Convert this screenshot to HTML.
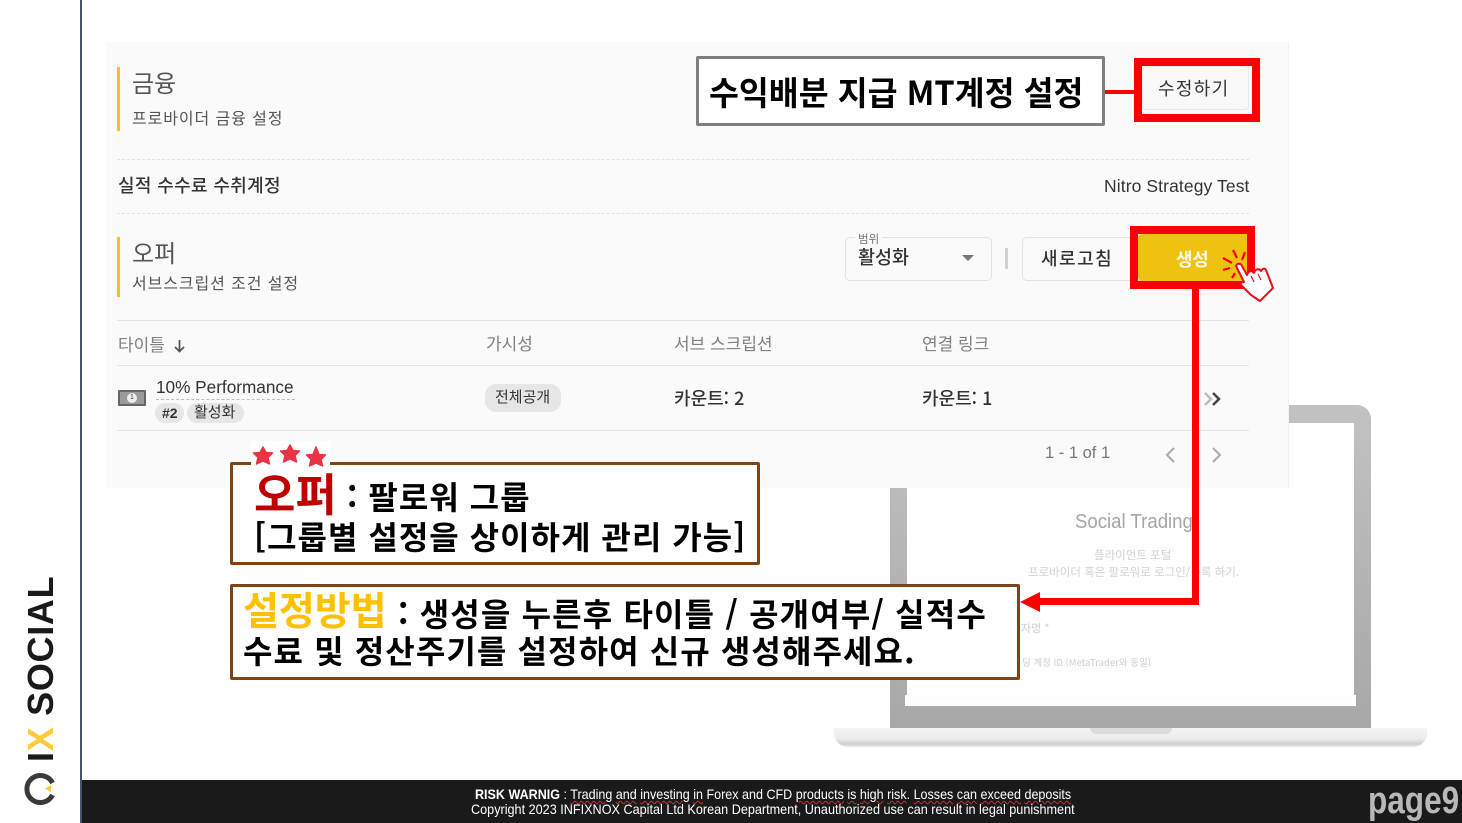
<!DOCTYPE html>
<html lang="ko"><head><meta charset="utf-8"><title>page9</title>
<style>
html,body{margin:0;padding:0;background:#fff}
body{width:1462px;height:823px;position:relative;overflow:hidden;font-family:"Liberation Sans","Noto Sans CJK KR",sans-serif;color:#333}
.a{position:absolute}
.t{position:absolute;white-space:nowrap;line-height:1}
.k{font-family:"Noto Sans CJK KR",sans-serif}
.b{font-weight:700;color:#000}
.h{height:1px;background:#e4e4e4;position:absolute;left:117px;width:1132px}
.d{height:0;border-top:1px dashed #e2e2e2;position:absolute;left:117px;width:1132px}
.w{text-decoration:underline wavy #c33 1px;text-underline-offset:1px}
</style></head><body>

<!-- laptop -->
<div class="a" style="left:890px;top:405px;width:481px;height:323px;background:linear-gradient(#c2c2c2,#b4b4b4 50%,#a8a8a8);border-radius:14px 14px 0 0"></div>
<div class="a" style="left:907px;top:423px;width:447px;height:283px;background:#fefefe"></div>
<div class="a" style="left:905px;top:695px;width:451px;height:11px;background:#fdfdfd"></div>
<div class="a" style="left:834px;top:728px;width:593px;height:19px;background:linear-gradient(#f4f4f4,#ececec 55%,#cfcfcf 85%,#eee);border-radius:0 0 14px 14px"></div>
<div class="a" style="left:1090px;top:728px;width:82px;height:6px;background:#dcdcdc;border-radius:0 0 6px 6px"></div>
<div class="t" style="left:1075px;top:512px;font-size:20px;color:#a6a6a6;transform-origin:0 0;transform:scaleX(.93)">Social Trading</div>
<div class="t k" style="left:1094px;top:550px;font-size:11.500px;color:#d2d2d2">플라이언트 포털</div>
<div class="t k" style="left:1028px;top:567px;font-size:11.500px;color:#d2d2d2">프로바이더 혹은 팔로워로 로그인/등록 하기.</div>
<div class="t k" style="left:1021px;top:623px;font-size:11px;color:#cfcfcf">자명 *</div>
<div class="t k" style="left:1022px;top:658px;font-size:9.500px;color:#cfcfcf">딩 계정 ID (MetaTrader와 동일)</div>

<!-- panel -->
<div class="a" style="left:106px;top:42px;width:1183px;height:446px;background:#fafafa;border-right:1px solid #f0f0f0;box-sizing:border-box"></div>

<div class="a" style="left:117px;top:67px;width:3px;height:64px;background:#eec51f"></div>
<div class="t k" style="left:132px;top:70px;font-size:24px;color:#555">금융</div>
<div class="t k" style="left:132px;top:109px;font-size:16px;letter-spacing:.9px;color:#555">프로바이더 금융 설정</div>
<div class="d" style="top:159px"></div>
<div class="t k" style="left:118px;top:176px;font-size:18px;letter-spacing:.35px;color:#333;font-weight:500">실적 수수료 수취계정</div>
<div class="t" style="left:1104px;top:178px;font-size:17.500px;letter-spacing:.1px;color:#333">Nitro Strategy Test</div>
<div class="d" style="top:213px"></div>

<div class="a" style="left:117px;top:237px;width:3px;height:60px;background:#eec51f"></div>
<div class="t k" style="left:132px;top:240px;font-size:24px;color:#555">오퍼</div>
<div class="t k" style="left:132px;top:274px;font-size:16px;letter-spacing:.9px;color:#555">서브스크립션 조건 설정</div>

<div class="a" style="left:845px;top:237px;width:147px;height:44px;border:1px solid #e2e2e2;border-radius:5px;box-sizing:border-box;background:#fafafa"></div>
<div class="a k" style="left:855px;top:233px;padding:0 3px;background:#fafafa;font-size:11.500px;line-height:12px;color:#777">범위</div>
<div class="t k" style="left:858px;top:248px;font-size:18.500px;color:#333;font-weight:500">활성화</div>
<div class="a" style="left:962px;top:255px;width:0;height:0;border-left:6px solid transparent;border-right:6px solid transparent;border-top:6px solid #777"></div>
<div class="a" style="left:1005px;top:248px;width:3px;height:21px;background:#d0d0d0"></div>
<div class="a" style="left:1022px;top:237px;width:125px;height:44px;border:1px solid #e2e2e2;border-radius:5px;box-sizing:border-box;background:#fafafa"></div>
<div class="t k" style="left:1041px;top:249px;font-size:18px;letter-spacing:1.500px;color:#333;font-weight:500">새로고침</div>
<div class="a" style="left:1138px;top:234px;width:110px;height:47px;background:#efc210;border-radius:4px 0 0 4px"></div>
<div class="t k" style="left:1176px;top:250px;font-size:18px;color:#fff;font-weight:700;letter-spacing:-.3px;opacity:.92">생성</div>
<div class="a" style="left:1130px;top:226px;width:125px;height:63px;border:8px solid #f00;box-sizing:border-box"></div>

<div class="h" style="top:320px"></div>
<div class="t k" style="left:118px;top:335px;font-size:17px;color:#808080">타이틀</div>
<svg class="a" style="left:172px;top:338px" width="15" height="16" viewBox="0 0 15 16"><path d="M7.500 2v11M3 9l4.500 4.500L12 9" fill="none" stroke="#555" stroke-width="1.800"/></svg>
<div class="t k" style="left:486px;top:334px;font-size:17px;color:#808080">가시성</div>
<div class="t k" style="left:674px;top:334px;font-size:17px;color:#808080">서브 스크립션</div>
<div class="t k" style="left:922px;top:334px;font-size:17px;color:#808080">연결 링크</div>
<div class="h" style="top:365px"></div>

<div class="a" style="left:118px;top:390px;width:28px;height:16px;background:#666;border-radius:1px"></div>
<div class="a" style="left:120px;top:392px;width:24px;height:12px;background:#9a9a9a"></div>
<div class="a" style="left:127px;top:393px;width:10px;height:10px;background:#eee;border-radius:50%;font-size:7px;line-height:10px;text-align:center;color:#444">1</div>
<div class="t" style="left:156px;top:379px;font-size:17.200px;color:#333">10% Performance</div>
<div class="a" style="left:156px;top:399px;width:139px;border-top:1px dashed #bbb"></div>
<div class="a" style="left:155px;top:403px;width:29px;height:20px;background:#e6e6e6;border-radius:10px"></div>
<div class="t" style="left:162px;top:406px;font-size:14px;font-weight:700;color:#333">#2</div>
<div class="a" style="left:187px;top:403px;width:57px;height:20px;background:#e6e6e6;border-radius:10px"></div>
<div class="t k" style="left:194px;top:404px;font-size:15px;color:#333">활성화</div>
<div class="a" style="left:485px;top:384px;width:76px;height:28px;background:#e6e6e6;border-radius:11px"></div>
<div class="t k" style="left:495px;top:389px;font-size:15px;color:#333">전체공개</div>
<div class="t k" style="left:674px;top:389px;font-size:18px;color:#333;font-weight:500">카운트: 2</div>
<div class="t k" style="left:922px;top:389px;font-size:18px;color:#333;font-weight:500">카운트: 1</div>
<svg class="a" style="left:1202px;top:391px" width="22" height="16" viewBox="0 0 22 16"><path d="M3 2l6 6-6 6" fill="none" stroke="#bbb" stroke-width="2.500"/><path d="M11 2l6 6-6 6" fill="none" stroke="#444" stroke-width="2.500"/></svg>
<div class="h" style="top:430px"></div>

<div class="t" style="left:1045px;top:445px;font-size:16.500px;color:#777">1 - 1 of 1</div>
<svg class="a" style="left:1163px;top:445px" width="14" height="20" viewBox="0 0 14 20"><path d="M11 3L4 10l7 7" fill="none" stroke="#aaa" stroke-width="2"/></svg>
<svg class="a" style="left:1210px;top:445px" width="14" height="20" viewBox="0 0 14 20"><path d="M3 3l7 7-7 7" fill="none" stroke="#aaa" stroke-width="2"/></svg>

<!-- red annotations -->
<div class="a" style="left:1134px;top:58px;width:126px;height:64px;border:8px solid #f00;box-sizing:border-box;background:#fafafa"></div>
<div class="a" style="left:1142px;top:66px;width:107px;height:44px;border:1px solid #e8e8e8;border-radius:4px;box-sizing:border-box;background:#f9f9f9"></div>
<div class="t k" style="left:1158px;top:79px;font-size:18px;letter-spacing:1.300px;color:#333">수정하기</div>
<div class="a" style="left:1105px;top:90px;width:30px;height:4px;background:#f00"></div>
<div class="a" style="left:696px;top:56px;width:409px;height:70px;border:3px solid #7f7f7f;box-sizing:border-box;background:#fff;border-radius:2px"></div>
<div class="t k b" style="left:709px;top:75px;font-size:33px;transform-origin:0 0;transform:scaleX(.985)">수익배분 지급 MT계정 설정</div>

<div class="a" style="left:1192px;top:289px;width:7px;height:316px;background:#f00"></div>
<div class="a" style="left:1036px;top:598px;width:163px;height:7px;background:#f00"></div>
<div class="a" style="left:1020px;top:592px;width:0;height:0;border-top:10px solid transparent;border-bottom:10px solid transparent;border-right:20px solid #f00"></div>

<!-- hand -->
<svg class="a" style="left:1215px;top:240px" width="65" height="65" viewBox="0 0 65 65">
<g stroke="#f00" stroke-width="2.200" fill="none"><path d="M8 18l9 5M8 30l7-2M17 38l3-5M18 10l4 8M30 12l-3 8"/></g>
<path d="M21 26c1-3 5-3 6 0l5 9c1-4 5-5 7-2 1-4 5-5 7-2 2-3 4-3 5-1l7 18-13 13-9-6-10-10c-1-2 1-3 3-3z" fill="#fff" stroke="#e3101c" stroke-width="2" stroke-linejoin="round"/>
<path d="M36 36l3 6M43 34l3 6" stroke="#e3101c" stroke-width="1.200" fill="none"/>
</svg>

<!-- offer callout -->
<div class="a" style="left:230px;top:462px;width:530px;height:103px;border:3px solid #7f4315;box-sizing:border-box;background:#fff;border-radius:2px"></div>
<div class="a" style="left:251px;top:441px;width:79px;height:26px;background:#fff"></div>
<svg class="a" style="left:250px;top:441px" width="80" height="28" viewBox="0 0 80 28">
<g fill="#ea3344" stroke="#ea3344" stroke-width="1.500" stroke-linejoin="round"><polygon points="13,6 16,11.500 22.500,12 18,16.500 19.500,23 13,20 6.500,23 8,16.500 3.500,12 10,11.500"/><polygon transform="translate(27,-2)" points="13,6 16,11.500 22.500,12 18,16.500 19.500,23 13,20 6.500,23 8,16.500 3.500,12 10,11.500"/><polygon transform="translate(53,2)" points="13,4 16,11.500 22.500,12 18,16.500 19.500,23 13,20 6.500,23 8,16.500 3.500,12 10,11.500"/></g></svg>
<div class="t k" style="left:254px;top:469px;font-size:45px;font-weight:700;color:#c00000">오퍼</div>
<div class="t k b" style="left:347px;top:480px;font-size:32px;letter-spacing:1px">: 팔로워 그룹</div>
<div class="t k b" style="left:254px;top:520px;font-size:32px;letter-spacing:1px">[그룹별 설정을 상이하게 관리 가능]</div>

<!-- method callout -->
<div class="a" style="left:230px;top:584px;width:790px;height:96px;border:3px solid #7f4315;box-sizing:border-box;background:#fff;border-radius:2px"></div>
<div class="t k" style="left:243px;top:590px;font-size:39px;font-weight:700;color:#ffc000">설정방법</div>
<div class="t k b" style="left:398px;top:597px;font-size:32px;letter-spacing:1.150px">: 생성을 누른후 타이틀 / 공개여부/ 실적수</div>
<div class="t k b" style="left:243px;top:634px;font-size:32px;letter-spacing:1.100px">수료 및 정산주기를 설정하여 신규 생성해주세요.</div>

<!-- sidebar -->
<div class="a" style="left:80px;top:0;width:2px;height:823px;background:#44546a"></div>
<div class="t" style="left:23px;top:762px;font-size:36px;letter-spacing:.7px;font-weight:700;color:#1a1a1a;transform-origin:0 0;transform:rotate(-90deg)"><span>I</span><span style="color:#fdc93f">X</span> SOCIAL</div>
<svg class="a" style="left:23px;top:772px" width="36" height="36" viewBox="0 0 36 36"><path d="M29.500 11A13.500 13.500 0 1 0 29.500 23" fill="none" stroke="#3a3a3a" stroke-width="5"/><polygon points="22,16.500 28,13 28,20" fill="#fdc93f"/></svg>

<!-- footer -->
<div class="a" style="left:82px;top:780px;width:1380px;height:43px;background:#1a1a1a"></div>
<div class="t" style="left:475px;top:787px;font-size:14px;color:#fff;transform-origin:0 0;transform:scaleX(.896)"><b>RISK WARNIG</b> : <span class="w">Trading</span> <span class="w">and</span> <span class="w">investing</span> <span class="w">in</span> Forex and CFD <span class="w">products</span> <span class="w">is</span> <span class="w">high</span> <span class="w">risk</span>. <span class="w">Losses</span> <span class="w">can</span> <span class="w">exceed</span> <span class="w">deposits</span></div>
<div class="t" style="left:471px;top:802px;font-size:14px;color:#fff;transform-origin:0 0;transform:scaleX(.903)">Copyright 2023 INFIXNOX Capital Ltd Korean Department, Unauthorized use can result in legal punishment</div>
<div class="t" style="left:1368px;top:782px;font-size:38px;font-weight:700;color:#b8b8b8;transform-origin:0 0;transform:scaleX(.83)">page9</div>
</body></html>
